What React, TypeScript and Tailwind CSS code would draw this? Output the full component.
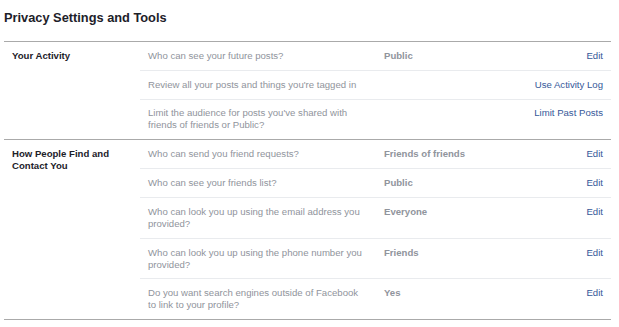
import React from 'react';

type Row = { q: string; value?: string; action: string };

const SECTIONS: { label: string; rows: Row[] }[] = [
  {
    label: 'Your Activity',
    rows: [
      { q: 'Who can see your future posts?', value: 'Public', action: 'Edit' },
      { q: "Review all your posts and things you're tagged in", action: 'Use Activity Log' },
      { q: "Limit the audience for posts you've shared with friends of friends or Public?", action: 'Limit Past Posts' },
    ],
  },
  {
    label: 'How People Find and Contact You',
    rows: [
      { q: 'Who can send you friend requests?', value: 'Friends of friends', action: 'Edit' },
      { q: 'Who can see your friends list?', value: 'Public', action: 'Edit' },
      { q: 'Who can look you up using the email address you provided?', value: 'Everyone', action: 'Edit' },
      { q: 'Who can look you up using the phone number you provided?', value: 'Friends', action: 'Edit' },
      { q: 'Do you want search engines outside of Facebook to link to your profile?', value: 'Yes', action: 'Edit' },
    ],
  },
];

export default function App() {
  return (
    <div className="w-[619px] h-[327px] bg-white px-[4px] pr-[8px] font-['Liberation_Sans',Arial,sans-serif]">
      {/* Header */}
      <h2 className="pt-[10px] mb-[15px] h-[26px] text-[12.8px] leading-[16px] font-bold text-[#1d2129]">
        Privacy Settings and Tools
      </h2>

      {/* Sections */}
      <div className="border-b border-[#aaaaaa]">
        {SECTIONS.map((s) => (
          <div key={s.label} className="flex border-t border-[#aaaaaa]">
            <div className="w-[136px] shrink-0 pl-[8px] pr-[20px] pt-[8px] text-[9.6px] leading-[11.5px] font-bold text-[#1d2129]">
              {s.label}
            </div>
            <div className="flex-1">
              {s.rows.map((r, i) => (
                <div
                  key={r.q}
                  className={`flex items-start py-[7.9px] pl-[8px] pr-[8px] text-[9.6px] leading-[12px] ${i > 0 ? 'border-t border-[#e9ebee]' : ''}`}
                >
                  <div className="w-[236px] shrink-0 pr-[18px] text-[#90949c]">{r.q}</div>
                  <div className="w-[120px] shrink-0 font-bold text-[#90949c]">{r.value}</div>
                  <div className="flex-1 text-right text-[#365899]">
                    <a href="#">{r.action}</a>
                  </div>
                </div>
              ))}
            </div>
          </div>
        ))}
      </div>
    </div>
  );
}
